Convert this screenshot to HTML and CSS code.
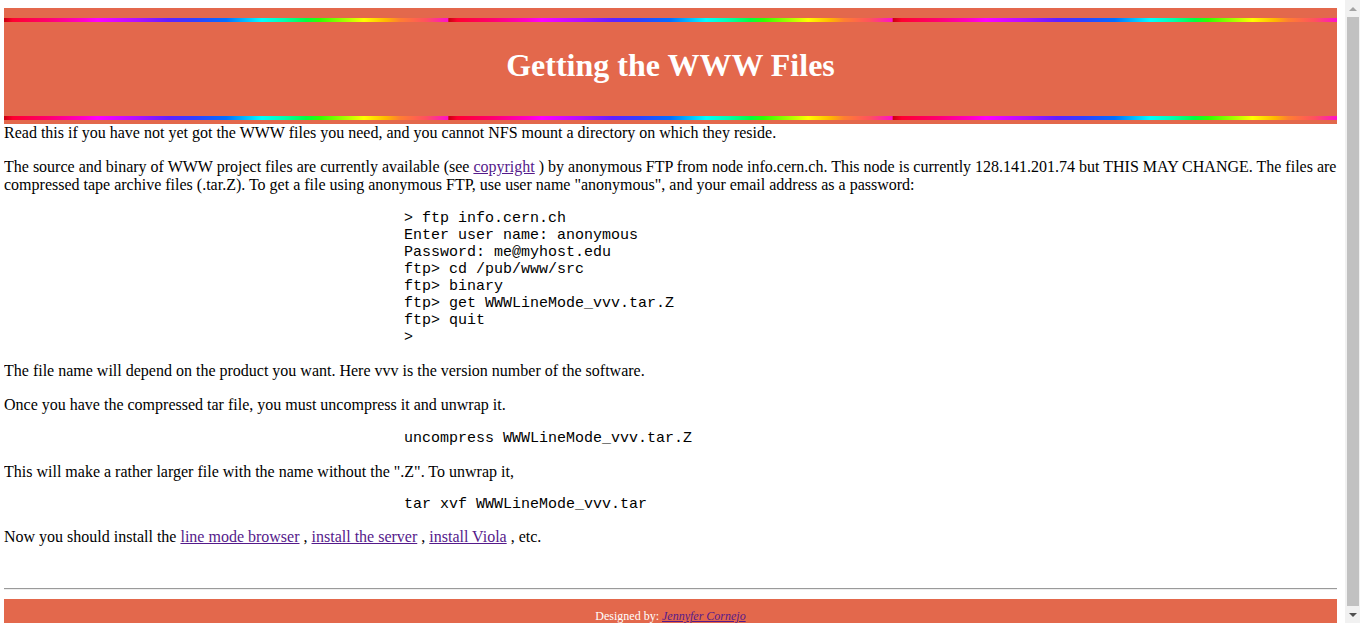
FILE: index.html
```html
<!DOCTYPE html>
<html>
<head>
<meta charset="utf-8">
<title>Getting the WWW Files</title>
<link rel="stylesheet" href="styles.css">
</head>
<body>
<header class="banner">
  <div class="rainbow"></div>
  <h1 class="title">Getting the WWW Files</h1>
  <div class="rainbow"></div>
</header>
<main class="content">
  <p class="first">Read this if you have not yet got the WWW files you need, and you cannot NFS mount a directory on which they reside.</p>
  <p>The source and binary of WWW project files are currently available (see <a href="#">copyright</a> ) by anonymous FTP from node info.cern.ch. This node is currently 128.141.201.74 but THIS MAY CHANGE. The files are compressed tape archive files (.tar.Z). To get a file using anonymous FTP, use user name "anonymous", and your email address as a password:</p>
<pre class="code">&gt; ftp info.cern.ch
Enter user name: anonymous
Password: me@myhost.edu
ftp&gt; cd /pub/www/src
ftp&gt; binary
ftp&gt; get WWWLineMode_vvv.tar.Z
ftp&gt; quit
&gt;</pre>
  <p>The file name will depend on the product you want. Here vvv is the version number of the software.</p>
  <p>Once you have the compressed tar file, you must uncompress it and unwrap it.</p>
<pre class="code">uncompress WWWLineMode_vvv.tar.Z</pre>
  <p>This will make a rather larger file with the name without the ".Z". To unwrap it,</p>
<pre class="code tight">tar xvf WWWLineMode_vvv.tar</pre>
  <p class="last">Now you should install the <a href="#">line mode browser</a> , <a href="#">install the server</a> , <a href="#">install Viola</a> , etc.</p>
</main>
<hr class="rule">
<footer class="footer">
  <span>Designed by: <a href="#" class="author">Jennyfer Cornejo</a></span>
</footer>
<div class="scrollbar" aria-hidden="true">
  <div class="sb-btn"><span class="arrow-up"></span></div>
  <div class="sb-thumb"></div>
  <div class="sb-btn"><span class="arrow-down"></span></div>
</div>
</body>
</html>
```

FILE: styles.css
```css
html {
  background: #ffffff;
}
body {
  margin: 8px 23px 0 4px;
  font-family: "Liberation Serif", "Times New Roman", serif;
  font-size: 16px;
  color: #000;
}
.banner {
  background: #e3684c;
  padding: 10px 0 4px;
}
.rainbow {
  height: 4px;
  background-image: linear-gradient(to right,
    #c8000c 0%, #ff0030 2%, #ff0070 10%, #ff00cc 18%, #ff00ff 21%,
    #b010ff 30%, #6020ff 37%, #3040ff 43%, #0070ff 50%, #00c8ff 55%,
    #00ffff 58%, #00ffb0 63%, #00ff40 68%, #30ff00 71%, #aaff00 77%,
    #ffff00 81%, #ffb800 86%, #ff8030 89%, #ff5060 95%, #ff10cc 100%);
  background-size: 33.3333% 100%;
  background-repeat: repeat-x;
}
.title {
  margin: 0;
  padding: 25px 0 32px;
  text-align: center;
  color: #ffffff;
  font-size: 32px;
  font-weight: bold;
}
.content p {
  margin: 16px 0;
}
.content p.first {
  margin-top: 0;
}
.content p.last {
  margin-bottom: 0;
}
.code {
  margin: 16px 0 16px 30%;
  font-family: "Liberation Mono", "Courier New", monospace;
  font-size: 15px;
  line-height: 17px;
}
.code.tight {
  margin-top: -1px;
  margin-bottom: -1px;
}
a {
  color: #551a8b;
}
.rule {
  margin: 42px 0 9px;
  border: none;
  border-top: 1px solid #9a9a9a;
  border-bottom: 1px solid #eeeeee;
  height: 0;
}
.footer {
  background: #e3684c;
  color: #ffffff;
  text-align: center;
  font-size: 12px;
  padding: 10px 0 14px;
}
.author {
  font-style: italic;
  color: #551a8b;
}
.scrollbar {
  position: fixed;
  top: 0;
  right: 0;
  width: 15px;
  height: 100%;
  background: #f1f1f1;
  display: flex;
  flex-direction: column;
}
.sb-btn {
  height: 17px;
  display: flex;
  align-items: center;
  justify-content: center;
}
.sb-thumb {
  flex: 1;
  background: #c1c1c1;
  margin: 0 1px 0 2px;
}
.arrow-up {
  width: 0;
  height: 0;
  border-left: 4px solid transparent;
  border-right: 4px solid transparent;
  border-bottom: 4px solid #a3a3a3;
}
.arrow-down {
  width: 0;
  height: 0;
  border-left: 4px solid transparent;
  border-right: 4px solid transparent;
  border-top: 4px solid #505050;
}
```
